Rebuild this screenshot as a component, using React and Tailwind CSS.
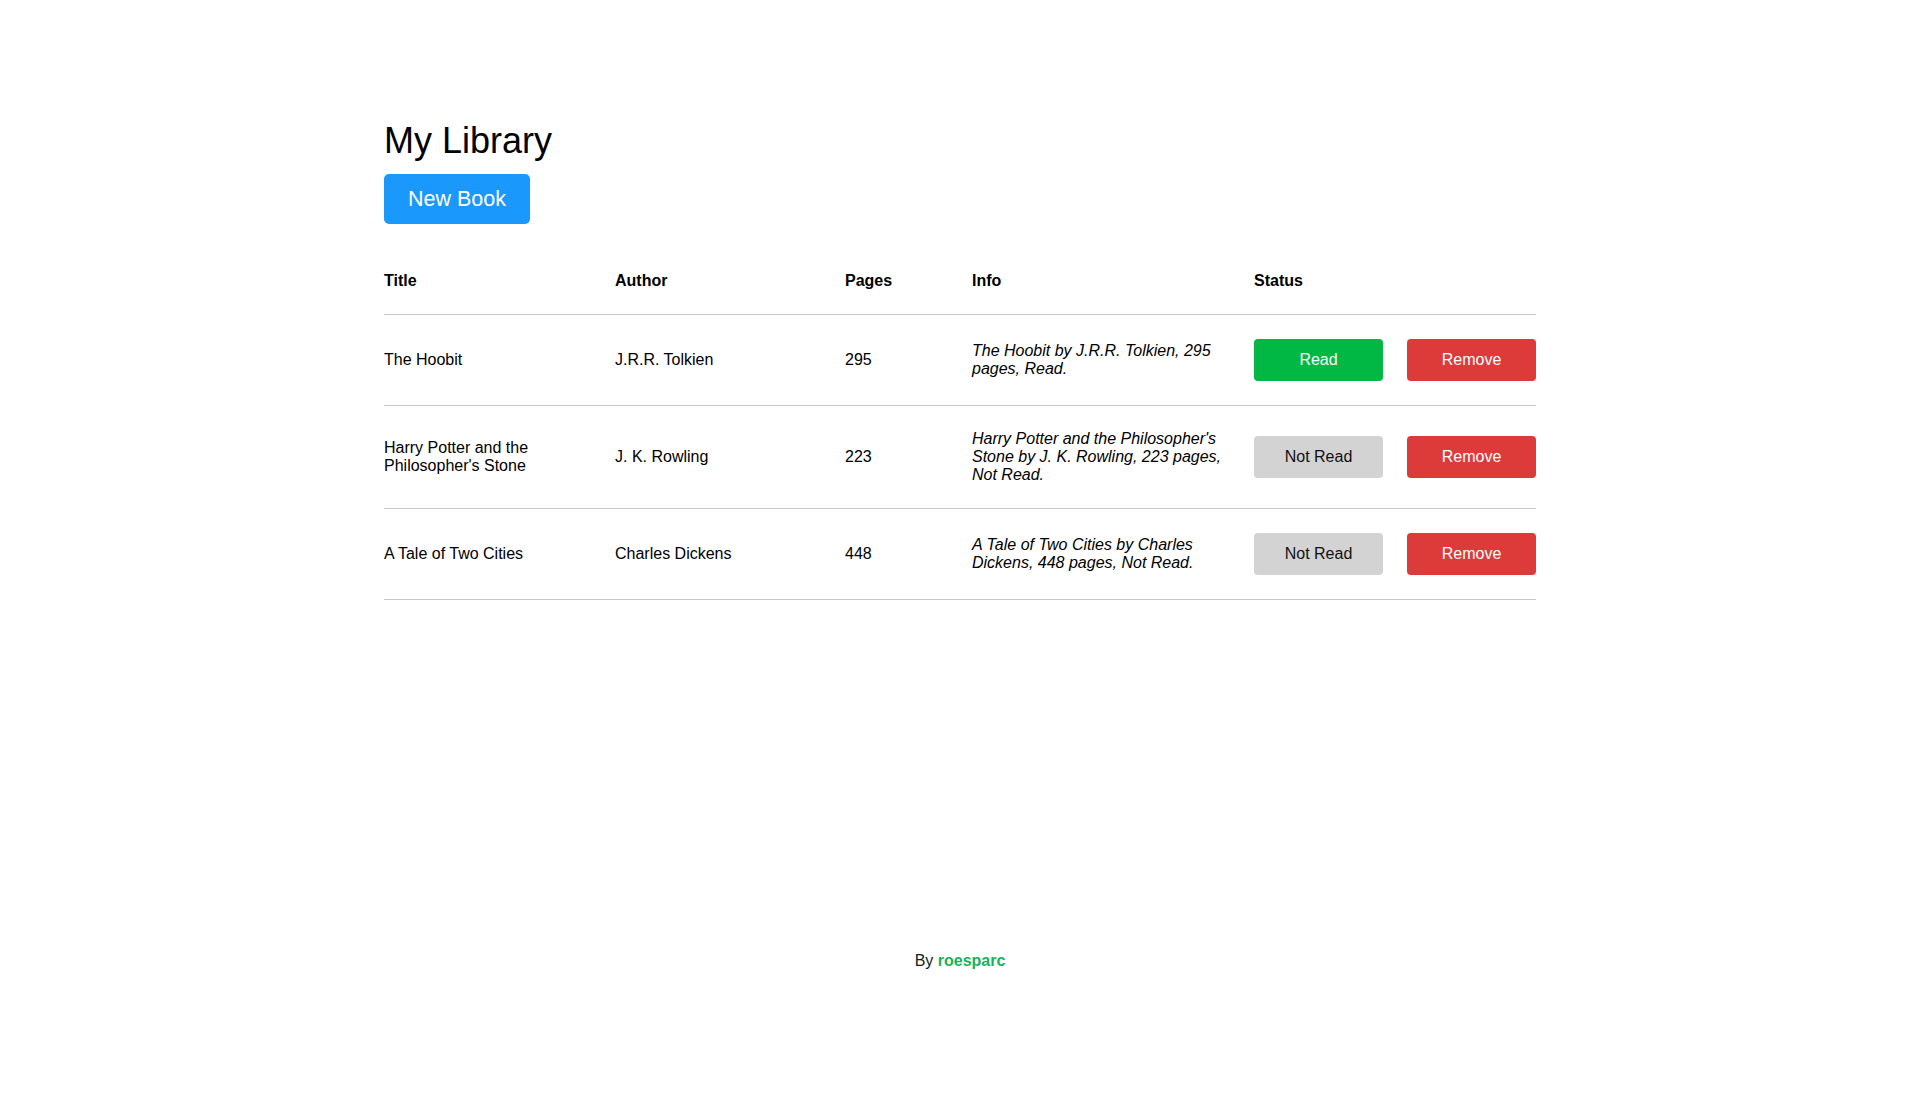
const BOOKS = [
  { title: 'The Hoobit', author: 'J.R.R. Tolkien', pages: 295, read: true },
  { title: "Harry Potter and the Philosopher's Stone", author: 'J. K. Rowling', pages: 223, read: false },
  { title: 'A Tale of Two Cities', author: 'Charles Dickens', pages: 448, read: false },
]

const COLS = 'grid grid-cols-[231px_230px_127px_282px_153px_129px] items-center'

function BookRow({ book }) {
  const info = `${book.title} by ${book.author}, ${book.pages} pages, ${book.read ? 'Read' : 'Not Read'}.`
  return (
    <div className={`${COLS} border-b border-[#c8c8c8]`}>
      <div className="py-6 pr-6">{book.title}</div>
      <div className="py-6 pr-6">{book.author}</div>
      <div className="py-6 pr-6">{book.pages}</div>
      <div className="py-6 pr-6 italic">{info}</div>
      <div className="py-6">
        <button
          className={`h-[42px] w-[129px] rounded-[4px] ${
            book.read ? 'bg-[#00b843] text-white' : 'bg-[#d3d3d3] text-[#111]'
          }`}
        >
          {book.read ? 'Read' : 'Not Read'}
        </button>
      </div>
      <div className="py-6">
        <button className="h-[42px] w-[129px] rounded-[4px] bg-[#dd3a3a] text-white">Remove</button>
      </div>
    </div>
  )
}

export default function App() {
  return (
    <div
      className="flex min-h-screen flex-col bg-white text-[16px] leading-[normal] text-black"
      style={{ fontFamily: '"Liberation Sans", Arial, sans-serif' }}
    >
      <main className="mx-auto w-[60%] flex-1 pt-[120px]">
        <h1 className="text-[36px] leading-[normal]">My Library</h1>
        <button className="mt-[12px] h-[50px] w-[146px] rounded-[5px] bg-[#1a98fc] text-[21.5px] text-white">
          New Book
        </button>

        <div className="mt-[24px]">
          <div className={`${COLS} border-b border-[#c8c8c8] font-bold`}>
            <div className="py-6 pr-6">Title</div>
            <div className="py-6 pr-6">Author</div>
            <div className="py-6 pr-6">Pages</div>
            <div className="py-6 pr-6">Info</div>
            <div className="py-6">Status</div>
            <div className="py-6" />
          </div>
          {BOOKS.map((book) => (
            <BookRow key={book.title} book={book} />
          ))}
        </div>
      </main>

      <footer className="pb-[132px] text-center text-[#0d1b2a]">
        By <span className="font-bold text-[#16b35a]">roesparc</span>
      </footer>
    </div>
  )
}
